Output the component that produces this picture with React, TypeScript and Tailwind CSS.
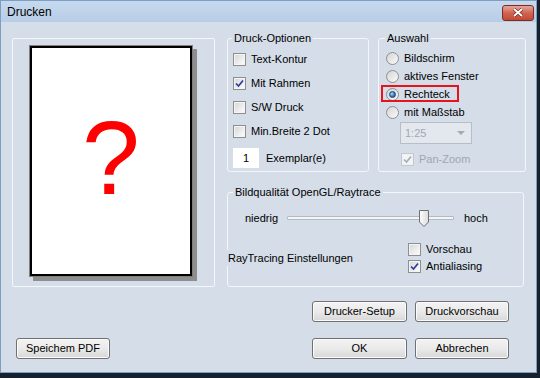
import React from "react";

const Check = ({ checked, disabled }: { checked?: boolean; disabled?: boolean }) => (
	<span
		className={`flex h-[13px] w-[13px] shrink-0 border p-[1px] ${
			disabled ? "border-[#c4c9d0] bg-[#eef1f4]" : "border-[#8e8f8f] bg-[#f4f4f4]"
		}`}
	>
		<span
			className={`flex flex-1 items-center justify-center ${
				disabled ? "bg-[#f2f4f6]" : "bg-gradient-to-br from-[#d9d9d9] to-[#fbfbfb]"
			}`}
		>
			{checked && (
				<svg width="9" height="9" viewBox="0 0 9 9">
					<path
						d="M1 4.5 L3.5 7 L8 1.5"
						fill="none"
						stroke={disabled ? "#a9adb3" : "#2a3f9b"}
						strokeWidth="1.7"
					/>
				</svg>
			)}
		</span>
	</span>
);

const Radio = ({ on }: { on?: boolean }) => (
	<span className="flex h-[13px] w-[13px] shrink-0 items-center justify-center rounded-full border border-[#8e8f8f] bg-gradient-to-br from-[#d4d4d4] to-[#fbfbfb]">
		{on && (
			<span className="h-[7px] w-[7px] rounded-full border border-[#1d3f6c] bg-[radial-gradient(circle_at_35%_35%,#a9dcfb,#2a78c0_60%,#153f75)]" />
		)}
	</span>
);

const Btn = ({ children, w }: { children: React.ReactNode; w: string }) => (
	<button
		className={`${w} h-[21px] rounded-[3px] border border-[#707070] bg-gradient-to-b from-[#f3f3f3] via-[#eaeaea] to-[#d7d7d7] text-[11px] leading-none text-black shadow-[inset_0_0_0_1px_#fbfbfb]`}
	>
		{children}
	</button>
);

const Row = ({ children, cls = "" }: { children: React.ReactNode; cls?: string }) => (
	<div className={`flex items-center gap-[5px] ${cls}`}>{children}</div>
);

export default function App() {
	return (
		<div
			className="h-[378px] w-[540px] overflow-hidden bg-[#16212d] text-[11px] text-black"
			style={{ fontFamily: '"Liberation Sans", Arial, sans-serif' }}
		>
			<div className="flex h-[373px] w-[537px] flex-col border border-[#7b9ec3] bg-[#d4dde8]">
				{/* title bar */}
				<div className="flex h-[21px] items-center justify-between bg-gradient-to-b from-[#c6d9ee] to-[#b7cde6] pl-[6px] pr-[2px]">
					<span className="text-[12px]">Drucken</span>
					<span className="mt-[2px] flex h-[16px] w-[32px] items-center justify-center rounded-[3px] border border-[#7d2a22] bg-gradient-to-b from-[#e6a79b] via-[#d06450] to-[#c24a36]">
						<svg width="12" height="9" viewBox="0 0 12 9">
							<path d="M2 1 L10 8 M10 1 L2 8" stroke="#6b2018" strokeWidth="3.2" />
							<path d="M2 1 L10 8 M10 1 L2 8" stroke="#ffffff" strokeWidth="2" />
						</svg>
					</span>
				</div>

				{/* client */}
				<div className="flex flex-1 flex-col">
					<div className="flex gap-[12px] pl-[11px] pt-[10px]">
						{/* preview */}
						<div className="mt-[6px] flex h-[249px] w-[203px] rounded-[2px] border border-[#f4f7fa] pl-[16px] pt-[6px]">
							<div className="flex h-[232px] w-[164px] border border-[#7f7f7f] shadow-[4px_4px_0_#8e8e8e]">
								<div className="flex flex-1 items-center justify-center border-2 border-black bg-white pb-[6px]">
									<span className="text-[104px] leading-none text-[#ff0000]">?</span>
								</div>
							</div>
						</div>

						{/* right column */}
						<div className="flex flex-col">
							<div className="flex gap-[9px]">
								<fieldset className="h-[140px] w-[142px] rounded-[3px] border border-[#f4f7fa] pl-[5px] pt-[2px]">
									<legend className="-ml-[1px] px-[2px] leading-[13px]">Druck-Optionen</legend>
									<Row cls="h-[24px]">
										<Check />
										<span>Text-Kontur</span>
									</Row>
									<Row cls="h-[24px]">
										<Check checked />
										<span>Mit Rahmen</span>
									</Row>
									<Row cls="h-[24px]">
										<Check />
										<span>S/W Druck</span>
									</Row>
									<Row cls="h-[24px]">
										<Check />
										<span>Min.Breite 2 Dot</span>
									</Row>
									<div className="mt-[5px] flex items-center gap-[7px]">
										<span className="flex h-[20px] w-[26px] items-center justify-center bg-white">1</span>
										<span>Exemplar(e)</span>
									</div>
								</fieldset>

								<fieldset className="h-[140px] w-[148px] rounded-[3px] border border-[#f4f7fa] pl-[7px] pt-[4px]">
									<legend className="-ml-[1px] px-[2px] leading-[13px]">Auswahl</legend>
									<Row cls="h-[18px]">
										<Radio />
										<span>Bildschirm</span>
									</Row>
									<Row cls="h-[18px]">
										<Radio />
										<span>aktives Fenster</span>
									</Row>
									<Row cls="relative h-[18px]">
										<Radio on />
										<span>Rechteck</span>
										<span className="absolute left-[-5px] top-0 h-[17px] w-[78px] border-2 border-[#e8141c]" />
									</Row>
									<Row cls="h-[18px]">
										<Radio />
										<span>mit Maßstab</span>
									</Row>
									<div className="ml-[14px] mt-[1px] flex h-[22px] w-[72px] items-center justify-between border border-[#b9bec6] bg-[#e3e8ee] pl-[4px] pr-[6px] text-[#a3a7ad]">
										<span>1:25</span>
										<svg width="8" height="4" viewBox="0 0 8 4">
											<path d="M0 0 H8 L4 4 Z" fill="#a6aab0" />
										</svg>
									</div>
									<Row cls="ml-[15px] mt-[6px] h-[18px] gap-[3px]">
										<Check checked disabled />
										<span className="text-[#a3a7ad]">Pan-Zoom</span>
									</Row>
								</fieldset>
							</div>

							<fieldset className="mt-[14px] h-[101px] w-[297px] rounded-[3px] border border-[#f4f7fa] pl-[17px] pt-[9px]">
								<legend className="-ml-[12px] px-[2px] leading-[13px]">Bildqualität OpenGL/Raytrace</legend>
								<div className="flex h-[20px] items-center">
									<span className="w-[42px]">niedrig</span>
									<div className="relative flex h-[20px] w-[167px] items-center">
										<div className="h-[4px] w-full rounded-[1px] border border-[#b3bac4] bg-[#f3f5f8]" />
										<svg className="absolute left-[131px] top-[1px]" width="12" height="19" viewBox="0 0 12 19">
											<defs>
												<linearGradient id="th" x1="0" x2="1" y1="0" y2="0">
													<stop offset="0" stopColor="#fdfdfd" />
													<stop offset="1" stopColor="#dcdcdc" />
												</linearGradient>
											</defs>
											<path d="M1.5 1.5 H10.5 V13 L6 17.5 L1.5 13 Z" fill="url(#th)" stroke="#707070" />
										</svg>
									</div>
									<span className="ml-[10px]">hoch</span>
								</div>
								<div className="mt-[13px] flex items-center">
									<span className="-ml-[18px] bg-[#d4dde8] pl-[1px] pr-[2px]">RayTracing Einstellungen</span>
									<div className="ml-[53px] flex flex-col">
										<Row cls="h-[17px] gap-[3px]">
											<Check />
											<span>Vorschau</span>
										</Row>
										<Row cls="h-[17px] gap-[3px]">
											<Check checked />
											<span>Antialiasing</span>
										</Row>
									</div>
								</div>
							</fieldset>
						</div>
					</div>

					<div className="mt-[14px] flex justify-end gap-[8px] pr-[27px]">
						<Btn w="w-[95px]">Drucker-Setup</Btn>
						<Btn w="w-[94px]">Druckvorschau</Btn>
					</div>

					<div className="mt-[16px] flex items-center pl-[15px] pr-[27px]">
						<Btn w="w-[94px]">Speichem PDF</Btn>
						<div className="ml-auto flex gap-[8px]">
							<Btn w="w-[95px]">OK</Btn>
							<Btn w="w-[94px]">Abbrechen</Btn>
						</div>
					</div>
				</div>
			</div>
		</div>
	);
}
